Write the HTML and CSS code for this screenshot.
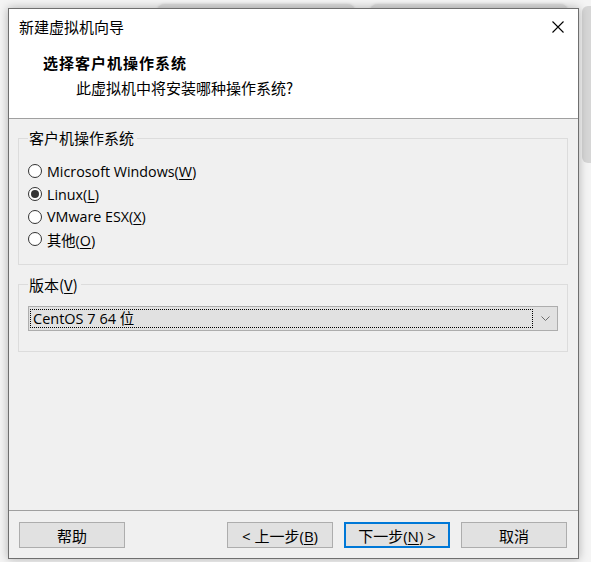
FILE: index.html
```html
<!DOCTYPE html>
<html lang="zh-CN">
<head>
<meta charset="utf-8">
<title>新建虚拟机向导</title>
<link rel="stylesheet" href="styles.css">
</head>
<body>
<div class="desk">
  <div class="bg-tab bg-tab-a"></div>
  <div class="bg-tab bg-tab-b"></div>
  <div class="bg-side"></div>
  <div class="window">
    <div class="header">
      <div class="titlebar">
        <span class="title">新建虚拟机向导</span>
        <svg class="close" width="12" height="12" viewBox="0 0 12 12"><path d="M0.5 0.5 L11.5 11.5 M11.5 0.5 L0.5 11.5" stroke="#000" stroke-width="1.1" fill="none"/></svg>
      </div>
      <div class="heading">选择客户机操作系统</div>
      <div class="subtitle">此虚拟机中将安装哪种操作系统?</div>
    </div>
    <div class="content">
      <fieldset class="group group-os">
        <legend>客户机操作系统</legend>
        <div class="radio"><span class="dot"></span><span>Microsoft Windows(<u>W</u>)</span></div>
        <div class="radio"><span class="dot checked"></span><span>Linux(<u>L</u>)</span></div>
        <div class="radio"><span class="dot"></span><span>VMware ESX(<u>X</u>)</span></div>
        <div class="radio"><span class="dot"></span><span>其他(<u>O</u>)</span></div>
      </fieldset>
      <fieldset class="group group-ver">
        <legend>版本(<u>V</u>)</legend>
        <div class="select">
          <span class="select-value">CentOS 7 64 位</span>
          <span class="select-arrow"><svg width="9" height="5" viewBox="0 0 9 5"><path d="M0.5 0.5 L4.5 4.5 L8.5 0.5" stroke="#6d6d6d" stroke-width="1" fill="none"/></svg></span>
        </div>
      </fieldset>
    </div>
    <div class="footer">
      <button class="btn">帮助</button>
      <div class="spacer"></div>
      <button class="btn">&lt; 上一步(<u>B</u>)</button>
      <button class="btn btn-default">下一步(<u>N</u>) &gt;</button>
      <button class="btn">取消</button>
    </div>
  </div>
</div>
</body>
</html>
```
FILE: styles.css
```css
html, body {
  margin: 0;
  padding: 0;
  background: #f4f4f4;
}
body {
  width: 591px;
  height: 562px;
  overflow: hidden;
  font-family: "Open Sans", "Noto Sans CJK SC", sans-serif;
  font-size: 14px;
  color: #000;
}
.desk {
  position: relative;
  width: 591px;
  height: 562px;
  padding: 8px 0 0 8px;
  box-sizing: border-box;
}
.bg-tab {
  position: absolute;
  top: 4px;
  height: 20px;
  background: #dadada;
  border-radius: 8px 8px 0 0;
  box-shadow: 0 0 3px rgba(0,0,0,0.15);
}
.bg-tab-a { left: 157px; width: 198px; }
.bg-tab-b { left: 370px; width: 198px; }
.bg-side {
  position: absolute;
  left: 582px;
  top: 6px;
  width: 20px;
  height: 157px;
  background: #d6d6d6;
  border-radius: 6px;
}
.window {
  position: relative;
  width: 571px;
  height: 551px;
  box-sizing: border-box;
  border: 1px solid #6f6f6f;
  background: #f0f0f0;
  box-shadow: 0 0 9px rgba(0,0,0,0.28);
  display: flex;
  flex-direction: column;
}
.header {
  height: 110px;
  box-sizing: border-box;
  background: #fff;
  border-bottom: 1px solid #a0a0a0;
  padding-top: 8px;
  font-family: "Noto Sans CJK SC", sans-serif;
}
.titlebar {
  display: flex;
  align-items: center;
  justify-content: space-between;
  height: 20px;
  padding: 0 14px 0 10px;
}
.title {
  font-size: 15px;
  line-height: 20px;
}
.close { display: block; }
.heading {
  margin-top: 16px;
  padding-left: 34px;
  font-size: 15px;
  font-weight: bold;
  line-height: 20px;
  letter-spacing: 1px;
}
.subtitle {
  margin-top: 5px;
  padding-left: 67px;
  font-size: 15px;
  line-height: 20px;
}
.content {
  flex: 1;
  padding: 9px 10px 0 9px;
}
.group {
  margin: 0;
  padding: 0 9px 0 9px;
  border: 1px solid #dcdcdc;
  min-width: 0;
}
.group legend {
  padding: 0 3px 0 1px;
  margin-left: 0;
  line-height: 20px;
  font-size: 15px;
  font-family: "Noto Sans CJK SC", sans-serif;
}
.group-os {
  padding-top: 12px;
  padding-bottom: 13px;
}
.radio {
  display: flex;
  align-items: center;
  height: 22.7px;
  gap: 5px;
  font-size: 14px;
  white-space: nowrap;
}
.radio span:last-child { font-size: 14.3px; }
.dot {
  width: 14px;
  height: 14px;
  border: 1px solid #333;
  border-radius: 50%;
  background: #fff;
  box-sizing: border-box;
  display: flex;
  align-items: center;
  justify-content: center;
  flex: none;
}
.dot.checked::after {
  content: "";
  width: 8px;
  height: 8px;
  border-radius: 50%;
  background: #333;
}
.group-ver {
  margin-top: 10px;
  padding-top: 11px;
  padding-bottom: 20px;
}
.select {
  display: flex;
  height: 25px;
  box-sizing: border-box;
  border: 1px solid #adadad;
  background: #e1e1e1;
  padding: 2px 0 2px 1px;
}
.select-value {
  flex: 1;
  border: 1px dotted #000;
  padding-left: 2px;
  line-height: 17px;
  font-size: 14.5px;
}
.select-arrow {
  width: 24px;
  display: flex;
  align-items: center;
  justify-content: center;
}
.select-arrow svg { display: block; }
.footer {
  border-top: 1px solid #a0a0a0;
  display: flex;
  align-items: center;
  gap: 11px;
  padding: 11px 11px 10px 10px;
}
.spacer { flex: 1; }
.btn {
  width: 106px;
  height: 26px;
  box-sizing: border-box;
  border: 1px solid #adadad;
  background: #e1e1e1;
  font-family: "Open Sans", "Noto Sans CJK SC", sans-serif;
  font-size: 15px;
  color: #000;
  padding: 0;
  margin: 0;
}
.btn-default {
  border: 2px solid #0078d7;
}
u { text-decoration: underline; text-underline-offset: 2px; }
```
